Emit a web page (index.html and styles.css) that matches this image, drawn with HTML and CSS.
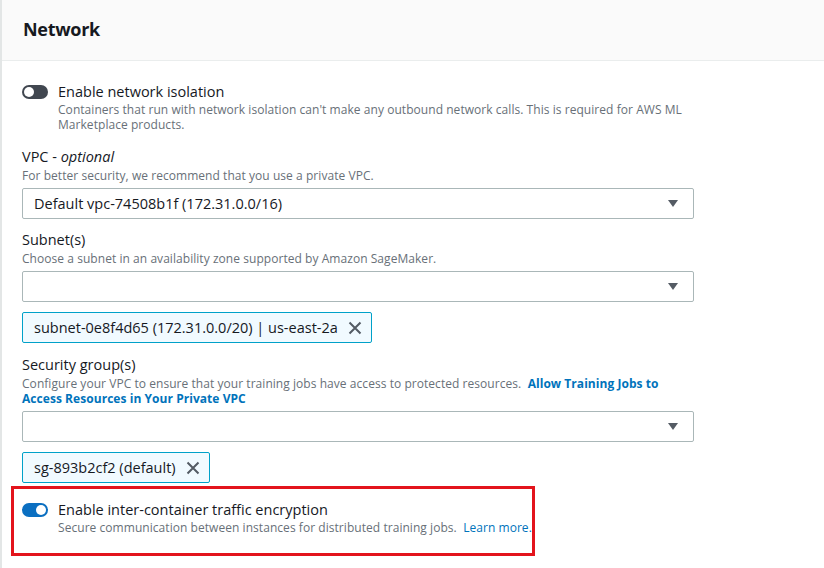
FILE: index.html
```html
<!DOCTYPE html>
<html lang="en">
<head>
<meta charset="utf-8">
<title>Network</title>
<link rel="stylesheet" href="styles.css">
</head>
<body>
<div class="panel">
  <div class="panel-header"><h2>Network</h2></div>
  <div class="panel-body">
    <div class="toggle-field">
      <span class="toggle off"><span class="knob"></span></span>
      <div class="toggle-text">
        <div class="toggle-label">Enable network isolation</div>
        <div class="desc">Containers that run with network isolation can't make any outbound network calls. This is required for AWS ML Marketplace products.</div>
      </div>
    </div>

    <div class="field first">
      <div class="label">VPC - <i>optional</i></div>
      <div class="desc">For better security, we recommend that you use a private VPC.</div>
      <div class="select"><span>Default vpc-74508b1f (172.31.0.0/16)</span><svg class="caret" width="10" height="7" viewBox="0 0 10 7"><path d="M0 0h10L5 7z" fill="#545b64"/></svg></div>
    </div>

    <div class="field">
      <div class="label">Subnet(s)</div>
      <div class="desc">Choose a subnet in an availability zone supported by Amazon SageMaker.</div>
      <div class="select"><span></span><svg class="caret" width="10" height="7" viewBox="0 0 10 7"><path d="M0 0h10L5 7z" fill="#545b64"/></svg></div>
      <div class="token">subnet-0e8f4d65 (172.31.0.0/20) | us-east-2a<svg class="x" width="14" height="14" viewBox="0 0 14 14"><path d="M1.5 1.5l11 11M12.5 1.5l-11 11" stroke="#545b64" stroke-width="2"/></svg></div>
    </div>

    <div class="field wide">
      <div class="label">Security group(s)</div>
      <div class="desc">Configure your VPC to ensure that your training jobs have access to protected resources.&nbsp; <a class="link strong" href="#">Allow Training Jobs to Access Resources in Your Private VPC</a></div>
      <div class="select"><span></span><svg class="caret" width="10" height="7" viewBox="0 0 10 7"><path d="M0 0h10L5 7z" fill="#545b64"/></svg></div>
      <div class="token">sg-893b2cf2 (default)<svg class="x" width="14" height="14" viewBox="0 0 14 14"><path d="M1.5 1.5l11 11M12.5 1.5l-11 11" stroke="#545b64" stroke-width="2"/></svg></div>
    </div>

    <div class="toggle-field highlight">
      <span class="toggle on"><span class="knob"></span></span>
      <div class="toggle-text">
        <div class="toggle-label">Enable inter-container traffic encryption</div>
        <div class="desc">Secure communication between instances for distributed training jobs.&nbsp; <a class="link" href="#">Learn more.</a></div>
      </div>
    </div>
  </div>
</div>
</body>
</html>
```
FILE: styles.css
```css
html, body {
  margin: 0;
  padding: 0;
  background: #ffffff;
}
body {
  font-family: "Open Sans", "Liberation Sans", sans-serif;
  color: #16191f;
  width: 824px;
  height: 568px;
  overflow: hidden;
}
.panel {
  border-left: 2px solid #e3e6e6;
  height: 568px;
}
.panel-header {
  background: #fafafa;
  border-bottom: 1px solid #eaeded;
  height: 60px;
  display: flex;
  align-items: center;
  padding-left: 21px;
}
.panel-header h2 {
  margin: 0 0 2px 0;
  font-size: 18px;
  font-weight: 700;
  letter-spacing: -0.3px;
}
.panel-body {
  padding: 22px 0 0 20px;
  width: 672px;
}
.toggle-field {
  display: flex;
  gap: 10px;
  align-items: flex-start;
}
.toggle {
  flex: none;
  width: 26px;
  height: 14px;
  border-radius: 7px;
  position: relative;
  margin-top: 2px;
}
.toggle.off { background: #414750; }
.toggle.on { background: #0b6fc1; }
.knob {
  position: absolute;
  top: 2px;
  width: 10px;
  height: 10px;
  border-radius: 50%;
  background: #ffffff;
}
.toggle.off .knob { left: 2px; }
.toggle.on .knob { right: 2px; }
.toggle-label {
  font-size: 14.5px;
  line-height: 17px;
}
.desc {
  font-size: 12px;
  line-height: 15px;
  color: #687078;
  letter-spacing: 0.05px;
}
.toggle-text .desc { margin-top: 2px; }
.field { margin-top: 11px; }
.field.first { margin-top: 15px; }
.field.wide { margin-top: 12px; }
.label {
  font-size: 14.5px;
  line-height: 20px;
}
.field .desc { margin-top: 1px; }
.link {
  color: #0073bb;
  text-decoration: none;
}
.link.strong { font-weight: 700; }
.select {
  margin-top: 5px;
  height: 29px;
  border: 1px solid #aab7b8;
  border-radius: 2px;
  display: flex;
  align-items: center;
  justify-content: space-between;
  padding: 0 15px 0 11px;
  font-size: 14.5px;
}
.token {
  margin-top: 10px;
  display: inline-flex;
  align-items: center;
  gap: 10px;
  height: 29px;
  padding: 0 9px 0 11px;
  background: #f1faff;
  border: 1px solid #00a1c9;
  border-radius: 2px;
  font-size: 14.5px;
}
.x { display: block; }
.highlight {
  position: relative;
  margin-top: 18px;
}
.highlight::after {
  content: "";
  position: absolute;
  left: -11px;
  top: -15px;
  width: 518px;
  height: 64px;
  border: 3px solid #e3141c;
  pointer-events: none;
}
```
